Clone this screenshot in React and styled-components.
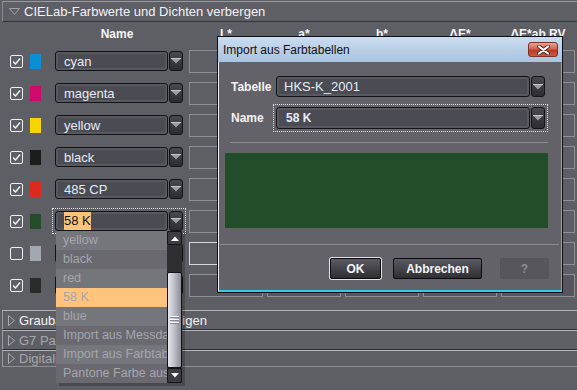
import React from 'react'
import styled, { createGlobalStyle } from 'styled-components'

const GlobalStyle = createGlobalStyle`
  html, body { margin: 0; padding: 0; background: #5e5e65; }
  body { font-family: "Liberation Sans", Arial, sans-serif; font-size: 13px; color: #ececf2; }
  * { box-sizing: border-box; }
`

const rows = [
  { name: 'cyan', color: '#0a8fd6', checked: true },
  { name: 'magenta', color: '#cf0a6e', checked: true },
  { name: 'yellow', color: '#f6d500', checked: true },
  { name: 'black', color: '#1c1c1c', checked: true },
  { name: '485 CP', color: '#dd2a1e', checked: true },
  { name: '58 K', color: '#224d28', checked: true, open: true },
  { name: 'grau', color: '#a3a7af', checked: false, focusBox: true },
  { name: 'schwarz', color: '#2b2b2b', checked: true, dark: true },
]

const listItems = ['yellow', 'black', 'red', '58 K', 'blue', 'Import aus Messdaten', 'Import aus Farbtabellen', 'Pantone Farbe auswählen']

const columns = ['L*', 'a*', 'b*', 'ΔE*', 'ΔE*ab RV']

const Page = styled.div`
  position: relative;
  width: 577px;
  height: 390px;
  overflow: hidden;
  background: #5e5e65;
`

const TopBar = styled.div`
  height: 21px;
  margin: 1px 0 0 2px;
  display: flex;
  align-items: center;
  gap: 4px;
  padding-left: 6px;
  border-top: 1px solid #9a9aa2;
  border-left: 1px solid #8a8a92;
  border-bottom: 1px solid #34343a;
  font-size: 13px;
  color: #f2f2f6;
`

const HeadRow = styled.div`
  height: 23px;
  display: flex;
  align-items: center;
  padding-left: 55px;
  font-size: 12px;
  font-weight: 700;
  color: #f4f4f8;
`

const NameHead = styled.div`
  width: 128px;
  text-align: center;
  padding-right: 4px;
`

const ValueHeads = styled.div`
  display: flex;
  gap: 4px;
  margin-left: 6px;
`

const ValueHead = styled.div`
  width: 74px;
  text-align: center;
`

const Row = styled.div`
  height: 32px;
  display: flex;
  align-items: center;
  padding-left: 10px;
`

const Check = styled.div`
  width: 13px;
  height: 13px;
  border: 1px solid #f0f0f4;
  border-radius: 2px;
  display: flex;
  align-items: center;
  justify-content: center;
`

const Swatch = styled.div`
  width: 11px;
  height: 15px;
  margin-left: 7px;
  background: ${p => p.$color};
`

const ComboWrap = styled.div`
  position: relative;
  display: flex;
  gap: 1px;
  width: ${p => p.$w}px;
  height: ${p => p.$h}px;
  margin-left: ${p => p.$ml || 0}px;
  outline: ${p => (p.$focus ? '1px dotted #e6e6ea' : 'none')};
  outline-offset: 2px;
`

const ComboField = styled.div`
  flex: 1;
  display: flex;
  align-items: center;
  padding-left: ${p => p.$pad}px;
  border: 1px solid #141418;
  border-radius: 3px;
  background: #4b4b53;
  box-shadow: inset 0 0 0 2px #58585f;
  color: #e4ecf8;
  font-size: ${p => (p.$bold ? 12 : 13)}px;
  font-weight: ${p => (p.$bold ? 700 : 400)};
  white-space: nowrap;
  overflow: hidden;
`

const Selected = styled.span`
  background: #ffc47c;
  color: #111;
  padding: 1px 0;
  line-height: 16px;
`

const ComboButton = styled.div`
  width: 14px;
  border: 1px solid #141418;
  border-radius: 3px;
  background: linear-gradient(#48484e, #2c2c31);
  display: flex;
  align-items: center;
  justify-content: center;
`

const Values = styled.div`
  display: flex;
  gap: 4px;
  margin-left: 6px;
`

const ValueBox = styled.div`
  width: 74px;
  height: 23px;
  border: 1px solid ${p => (p.$focus ? '#d6d6da' : '#8e8e96')};
  background: ${p => (p.$dark ? '#56565c' : 'transparent')};
`

const List = styled.div`
  position: absolute;
  top: 100%;
  left: 1px;
  width: 126px;
  display: flex;
  z-index: 5;
  box-shadow: 3px 3px 0 rgba(0, 0, 0, 0.22);
`

const Items = styled.div`
  flex: 1;
  min-width: 0;
`

const Item = styled.div`
  height: 19px;
  line-height: 19px;
  padding-left: 7px;
  font-size: 12.5px;
  white-space: nowrap;
  overflow: hidden;
  color: #a6a6ae;
  background: ${p => (p.$sel ? '#ffc47c' : p.$odd ? '#69696f' : '#75757c')};
`

const ScrollBar = styled.div`
  width: 15px;
  display: flex;
  flex-direction: column;
  background: #2e2e33;
`

const ScrollButton = styled.div`
  height: ${p => p.$h}px;
  border: 1px solid #141418;
  border-radius: 2px;
  background: #3c3c42;
  display: flex;
  align-items: center;
  justify-content: center;
`

const Track = styled.div`
  height: 27px;
`

const Thumb = styled.div`
  flex: 1;
  border: 1px solid #141418;
  border-radius: 2px;
  background: linear-gradient(to right, #e6e6ee, #bcbcc6 50%, #8c8c96);
  display: flex;
  align-items: center;
  justify-content: center;
`

const Grip = styled.div`
  width: 9px;
  height: 9px;
  background: repeating-linear-gradient(#f8f8fa 0 1px, #8a8a92 1px 2px, transparent 2px 3px);
`

const Sections = styled.div`
  margin-top: 9px;
`

const SectionBar = styled.div`
  height: ${p => (p.$last ? 17 : 20)}px;
  margin-left: 2px;
  display: flex;
  align-items: center;
  gap: 4px;
  padding-left: 5px;
  border-top: 1px solid #b4b4bc;
  border-left: 1px solid #9a9aa2;
  border-bottom: 1px solid ${p => (p.$last ? '#8e8e96' : '#2e2e34')};
  color: ${p => (p.$dim ? '#a6a6ae' : '#f2f2f6')};
  font-size: 13px;
  white-space: nowrap;
`

const Dialog = styled.div`
  position: absolute;
  left: 217px;
  top: 36px;
  width: 346px;
  height: 257px;
  border: 1px solid #101014;
  display: flex;
  flex-direction: column;
  z-index: 10;
`

const TitleBar = styled.div`
  height: 25px;
  flex-shrink: 0;
  display: flex;
  align-items: center;
  padding: 0 4px 0 5px;
  background: linear-gradient(#cadcf0, #a9c4e0);
  color: #101010;
  font-size: 12px;
`

const CloseButton = styled.div`
  margin-left: auto;
  width: 30px;
  height: 15px;
  border: 1px solid #7a3428;
  border-radius: 3px;
  background: linear-gradient(#eaa493 0%, #d4664e 45%, #ba3c26 55%, #cc5a40 100%);
  display: flex;
  align-items: center;
  justify-content: center;
`

const Body = styled.div`
  flex: 1;
  display: flex;
  flex-direction: column;
  padding-top: 14px;
  background: #626268;
  border-left: 1px solid #f0f0f4;
  border-right: 1px solid #3ec6e6;
  border-bottom: 2px solid #3ec6e6;
`

const FormRow = styled.div`
  display: flex;
  align-items: center;
  padding-left: 12px;
  margin-top: ${p => p.$mt || 0}px;
`

const Label = styled.div`
  width: 45px;
  font-size: 12px;
  font-weight: 700;
  color: #f2f2f6;
`

const Separator = styled.div`
  height: 1px;
  background: #8c8c94;
  margin: ${p => p.$mt}px ${p => p.$mr}px 0 ${p => p.$ml}px;
`

const ColorPreview = styled.div`
  height: 75px;
  margin: 10px 13px 0 6px;
  background: ${p => p.$color};
`

const ButtonRow = styled.div`
  display: flex;
  justify-content: flex-end;
  padding-right: 12px;
  margin-top: 13px;
`

const Button = styled.div`
  width: ${p => p.$w}px;
  height: 21px;
  margin-left: ${p => p.$ml || 0}px;
  display: flex;
  align-items: center;
  justify-content: center;
  border: 1px solid ${p => (p.$disabled ? '#55555b' : '#0c0c0e')};
  border-radius: 2px;
  background: ${p => (p.$disabled ? '#56565c' : 'linear-gradient(#5a5a60, #2e2e33)')};
  box-shadow: ${p => (p.$default ? '0 0 0 1px #e4e4e8' : 'none')};
  color: ${p => (p.$disabled ? '#8c8c94' : '#f4f4f8')};
  font-size: 12px;
  font-weight: 700;
`

function Arrow() {
  return (
    <svg width="10" height="6" viewBox="0 0 10 6">
      <polygon points="0,0.5 10,0.5 5,5.5" fill="#9c9ca4" />
      <line x1="0" y1="0.5" x2="10" y2="0.5" stroke="#c4c4ca" strokeWidth="1" />
    </svg>
  )
}

function ScrollArrow({ up }) {
  return (
    <svg width="8" height="5" viewBox="0 0 8 5">
      <polygon points={up ? '0,5 8,5 4,0.5' : '0,0 8,0 4,4.5'} fill="#fafafa" />
    </svg>
  )
}

function Combo({ value, w, h, ml, pad, bold, focus, highlight, children }) {
  return (
    <ComboWrap $w={w} $h={h} $ml={ml} $focus={focus}>
      <ComboField $pad={pad} $bold={bold}>
        {highlight ? <Selected>{value}</Selected> : value}
      </ComboField>
      <ComboButton>
        <Arrow />
      </ComboButton>
      {children}
    </ComboWrap>
  )
}

function DropList() {
  return (
    <List>
      <Items>
        {listItems.map((item, i) => (
          <Item key={item} $odd={i % 2 === 1} $sel={item === '58 K'}>
            {item}
          </Item>
        ))}
      </Items>
      <ScrollBar>
        <ScrollButton $h={14}>
          <ScrollArrow up />
        </ScrollButton>
        <Track />
        <Thumb>
          <Grip />
        </Thumb>
        <ScrollButton $h={15}>
          <ScrollArrow />
        </ScrollButton>
      </ScrollBar>
    </List>
  )
}

function CheckBox({ checked }) {
  return (
    <Check>
      {checked && (
        <svg width="11" height="11" viewBox="0 0 11 11">
          <path d="M2 5.5 L4.5 8 L9 2.5" fill="none" stroke="#f4f4f8" strokeWidth="1.4" />
        </svg>
      )}
    </Check>
  )
}

function Section({ title, dim, last }) {
  return (
    <SectionBar $dim={dim} $last={last}>
      <svg width="7" height="11" viewBox="0 0 7 11">
        <polygon points="0.5,0.5 6.5,5.5 0.5,10.5" fill="none" stroke="#a8a8b0" strokeWidth="1" />
      </svg>
      {title}
    </SectionBar>
  )
}

function ImportDialog() {
  return (
    <Dialog>
      <TitleBar>
        Import aus Farbtabellen
        <CloseButton>
          <svg width="13" height="10" viewBox="0 0 13 10">
            <path d="M2 1.5 L11 8.5 M11 1.5 L2 8.5" stroke="#5a2a24" strokeWidth="4" strokeLinecap="round" />
            <path d="M2 1.5 L11 8.5 M11 1.5 L2 8.5" stroke="#ffffff" strokeWidth="2.2" strokeLinecap="round" />
          </svg>
        </CloseButton>
      </TitleBar>
      <Body>
        <FormRow>
          <Label>Tabelle</Label>
          <Combo value="HKS-K_2001" w={269} h={21} pad={7} />
        </FormRow>
        <FormRow $mt={10}>
          <Label>Name</Label>
          <Combo value="58 K" w={269} h={22} pad={9} bold focus />
        </FormRow>
        <Separator $mt={13} $ml={11} $mr={13} />
        <ColorPreview $color="#224d28" />
        <Separator $mt={16} $ml={1} $mr={2} />
        <ButtonRow>
          <Button $w={51} $default>OK</Button>
          <Button $w={89} $ml={12}>Abbrechen</Button>
          <Button $w={49} $ml={18} $disabled>?</Button>
        </ButtonRow>
      </Body>
    </Dialog>
  )
}

export default function App() {
  return (
    <>
      <GlobalStyle />
      <Page>
        <TopBar>
          <svg width="11" height="7" viewBox="0 0 11 7">
            <polygon points="0.5,0.5 10.5,0.5 5.5,6.5" fill="none" stroke="#a0a0a8" strokeWidth="1" />
          </svg>
          CIELab-Farbwerte und Dichten verbergen
        </TopBar>
        <HeadRow>
          <NameHead>Name</NameHead>
          <ValueHeads>
            {columns.map(c => (
              <ValueHead key={c}>{c}</ValueHead>
            ))}
          </ValueHeads>
        </HeadRow>
        {rows.map(r => (
          <Row key={r.name}>
            <CheckBox checked={r.checked} />
            <Swatch $color={r.color} />
            <Combo value={r.name} w={128} h={20} ml={14} pad={8} focus={r.open} highlight={r.open}>
              {r.open && <DropList />}
            </Combo>
            <Values>
              {columns.map((c, i) => (
                <ValueBox key={c} $focus={r.focusBox && i === 0} $dark={r.dark} />
              ))}
            </Values>
          </Row>
        ))}
        <Sections>
          <Section title="Graubalance-Zielwerte anzeigen" />
          <Section title="G7 Parameter anzeigen" dim />
          <Section title="Digitalproof anzeigen" dim last />
        </Sections>
        <ImportDialog />
      </Page>
    </>
  )
}
